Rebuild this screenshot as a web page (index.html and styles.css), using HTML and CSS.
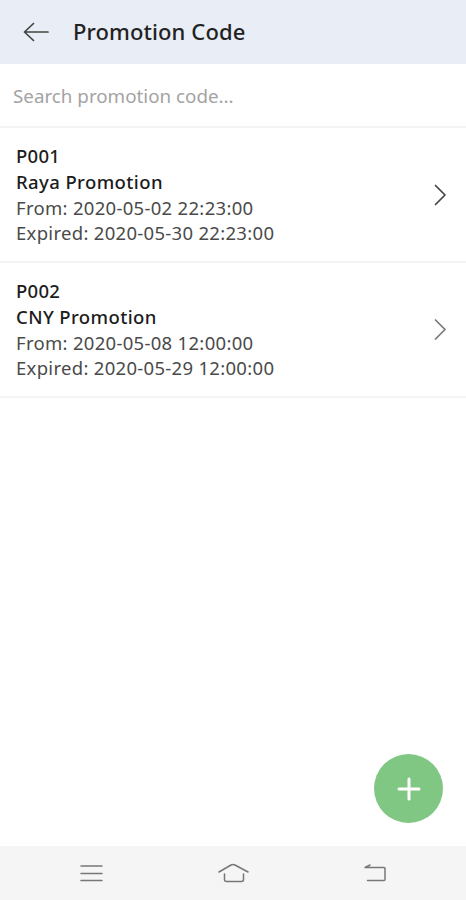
FILE: index.html
```
<!DOCTYPE html>
<html lang="en">
<head>
  <meta charset="UTF-8">
  <meta name="viewport" content="width=device-width, initial-scale=1.0">
  <title>Promotion Code</title>
  <link rel="stylesheet" href="styles.css">
</head>
<body>

  <header>
    <a href="#" class="back" aria-label="Back">
      <svg width="26" height="20" viewBox="0 0 26 20">
        <path d="M10.5 1.5L1.5 10l9 8.5M1.5 10H25"/>
      </svg>
    </a>
    <h1>Promotion Code</h1>
  </header>

  <div class="search">
    <input type="text" placeholder="Search promotion code...">
  </div>

  <main>
    <a href="#" class="promo">
      <div class="detail">
        <p class="code">P001</p>
        <p class="name">Raya Promotion</p>
        <p class="from">From: 2020-05-02 22:23:00</p>
        <p class="expired">Expired: 2020-05-30 22:23:00</p>
      </div>
      <svg class="chevron" width="14" height="22" viewBox="0 0 14 22">
        <path d="M2.5 1.5L12 11l-9.5 9.5"/>
      </svg>
    </a>

    <a href="#" class="promo">
      <div class="detail">
        <p class="code">P002</p>
        <p class="name">CNY Promotion</p>
        <p class="from">From: 2020-05-08 12:00:00</p>
        <p class="expired">Expired: 2020-05-29 12:00:00</p>
      </div>
      <svg class="chevron light" width="14" height="22" viewBox="0 0 14 22">
        <path d="M2.5 1L12 10.5 2.5 20"/>
      </svg>
    </a>
  </main>

  <button class="btn-add" aria-label="Add promotion">
    <svg width="24" height="24" viewBox="0 0 24 24">
      <path d="M12 2v20M2 12h20"/>
    </svg>
  </button>

  <nav>
    <svg width="32" height="22" viewBox="0 0 32 22">
      <path d="M6 4h21M6 11.5h21M6 18.5h21"/>
    </svg>
    <svg width="32" height="22" viewBox="0 0 32 22">
      <path d="M2 10l12-7q2-1 4 0l13 7M7.5 12v5.5q0 2 2 2h15q2 0 2-2V12"/>
    </svg>
    <svg width="32" height="22" viewBox="0 0 32 22">
      <path d="M11 3L6 5.5h19q1 0 1 1v11q0 1-1 1H8.500"/>
    </svg>
  </nav>

</body>
</html>
```
FILE: styles.css
```
* {
  box-sizing: border-box;
}

body {
  font-family: 'Noto Sans', sans-serif;
  background: #fff;
  color: #222;
  margin: 0;
  height: 100vh;
  display: flex;
  flex-direction: column;
}

svg {
  display: block;
  fill: none;
  stroke: #444;
  stroke-width: 1.7;
  stroke-linecap: round;
  stroke-linejoin: round;
}

header {
  background: #e9edf6;
  height: 64px;
  padding: 0 23px;
  display: flex;
  align-items: center;
  gap: 24px;
}

h1 {
  font-size: 22px;
  font-weight: 500;
  letter-spacing: 0.1px;
  margin: 0;
  padding-bottom: 2px;
}

.search {
  height: 64px;
  border-bottom: 2px solid #f4f4f4;
  display: flex;
}

.search input {
  width: 100%;
  border: none;
  outline: none;
  padding: 2px 13px 0;
  font-family: inherit;
  font-size: 18.8px;
}

.search input::placeholder {
  color: #a3a3a3;
}

main {
  flex: 1;
}

.promo {
  display: flex;
  align-items: center;
  justify-content: space-between;
  height: 135px;
  padding: 0 19px 0 16px;
  border-bottom: 2px solid #f4f4f4;
  color: #4a4a4a;
  text-decoration: none;
}

.promo p {
  margin: 0;
  font-size: 18.5px;
  line-height: 25.7px;
  letter-spacing: 0.3px;
}

.promo .code,
.promo .name {
  color: #1c1c1c;
  font-weight: 500;
}

.promo .name {
  letter-spacing: 0.4px;
}

.chevron.light {
  stroke: #777;
}

.btn-add {
  position: fixed;
  right: 23px;
  bottom: 77px;
  width: 69px;
  height: 69px;
  border: none;
  border-radius: 50%;
  background: #81c784;
  display: flex;
  align-items: center;
  justify-content: center;
}

.btn-add svg {
  stroke: #fff;
  stroke-width: 3;
}

nav {
  background: #f5f5f5;
  height: 54px;
  padding: 0 75px;
  display: flex;
  align-items: center;
  justify-content: space-between;
}

nav svg {
  stroke: #777;
  stroke-width: 1.5;
}
```
